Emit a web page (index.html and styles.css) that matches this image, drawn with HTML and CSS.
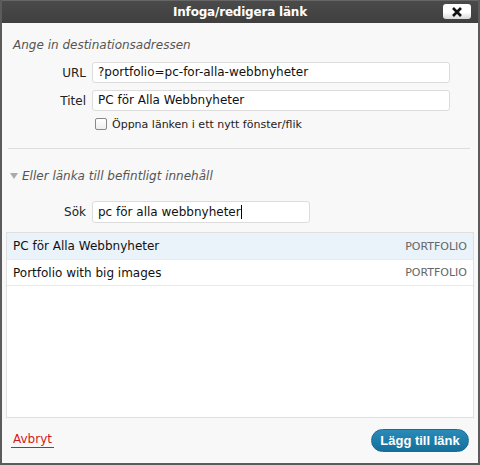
FILE: index.html
```html
<!DOCTYPE html>
<html>
<head>
<meta charset="utf-8">
<link rel="stylesheet" href="styles.css">
</head>
<body>
<div class="dialog">
  <div class="titlebar">
    <span class="title">Infoga/redigera länk</span>
    <span class="close"><svg width="12" height="10" viewBox="0 0 12 10"><path d="M2 1 L10 9 M10 1 L2 9" stroke="#111" stroke-width="2.6" stroke-linecap="butt"/></svg></span>
  </div>
  <div class="body">
    <div class="heading">Ange in destinationsadressen</div>
    <div class="row url-row">
      <label class="lbl">URL</label>
      <div class="input wide">?portfolio=pc-for-alla-webbnyheter</div>
    </div>
    <div class="row title-row">
      <label class="lbl">Titel</label>
      <div class="input wide">PC för Alla Webbnyheter</div>
    </div>
    <div class="check-row">
      <span class="checkbox"></span>
      <span>Öppna länken i ett nytt fönster/flik</span>
    </div>
    <div class="sep"></div>
    <div class="heading2"><span class="tri"></span>Eller länka till befintligt innehåll</div>
    <div class="row search-row">
      <label class="lbl">Sök</label>
      <div class="input narrow">pc för alla webbnyheter<span class="caret"></span></div>
    </div>
    <div class="list">
      <div class="item selected"><span>PC för Alla Webbnyheter</span><span class="type">PORTFOLIO</span></div>
      <div class="item"><span>Portfolio with big images</span><span class="type">PORTFOLIO</span></div>
    </div>
  </div>
  <div class="footer">
    <a class="cancel">Avbryt</a>
    <span class="btn">Lägg till länk</span>
  </div>
</div>
</body>
</html>
```
FILE: styles.css
```css
html, body {
  margin: 0;
  padding: 0;
}
body {
  width: 480px;
  height: 465px;
  font-family: "DejaVu Sans", "Liberation Sans", sans-serif;
  font-size: 12px;
  color: #222;
  background: #fff;
}
.dialog {
  width: 480px;
  height: 465px;
  box-sizing: border-box;
  border-left: 2px solid #5b5b5b;
  border-right: 2px solid #5b5b5b;
  border-bottom: 2px solid #5b5b5b;
  background: #f8f8f8;
  display: flex;
  flex-direction: column;
}
.titlebar {
  height: 23px;
  flex: none;
  background: linear-gradient(#4a4a4a, #3f3f3f);
  border-top: 1px solid #666;
  box-sizing: border-box;
  display: flex;
  align-items: center;
  justify-content: center;
  position: relative;
}
.title {
  color: #fff;
  font-weight: bold;
  font-size: 12px;
  letter-spacing: -0.2px;
}
.close {
  position: absolute;
  right: 7px;
  top: 3px;
  width: 28px;
  height: 15px;
  background: linear-gradient(#ffffff 55%, #d8d8d8);
  border-radius: 3px;
  display: flex;
  align-items: center;
  justify-content: center;
}
.body {
  flex: 1;
  display: flex;
  flex-direction: column;
  padding: 0 4px 0 4px;
}
.heading {
  font-style: italic;
  color: #555;
  font-size: 12px;
  margin: 14px 0 0 7px;
  height: 16px;
  line-height: 16px;
}
.row {
  display: flex;
  align-items: center;
}
.lbl {
  width: 80px;
  text-align: right;
  padding-right: 6px;
  font-size: 12px;
  color: #222;
}
.input {
  box-sizing: border-box;
  height: 21px;
  line-height: 19px;
  border: 1px solid #dcdcdc;
  border-radius: 3px;
  background: #fff;
  padding: 0 5px;
  font-size: 12px;
  color: #111;
  white-space: nowrap;
}
.wide {
  width: 358px;
}
.narrow {
  width: 218px;
  height: 22px;
  line-height: 20px;
}
.url-row {
  margin-top: 9px;
}
.title-row {
  margin-top: 7px;
}
.check-row {
  display: flex;
  align-items: center;
  margin: 6px 0 0 89px;
  font-size: 11px;
  color: #222;
  height: 14px;
}
.checkbox {
  width: 10px;
  height: 10px;
  border: 1px solid #888;
  border-radius: 2px;
  background: linear-gradient(#fff, #eee);
  margin-right: 5px;
}
.sep {
  height: 1px;
  background: #dddddd;
  margin: 17px 4px 0 2px;
}
.heading2 {
  font-style: italic;
  color: #555;
  font-size: 12px;
  margin: 19px 0 0 4px;
  height: 16px;
  line-height: 16px;
  display: flex;
  align-items: center;
}
.tri {
  width: 0;
  height: 0;
  border-left: 4px solid transparent;
  border-right: 4px solid transparent;
  border-top: 6px solid #aaa;
  margin-right: 4px;
}
.search-row {
  margin-top: 17px;
}
.caret {
  display: inline-block;
  width: 1px;
  height: 14px;
  background: #000;
  vertical-align: -3px;
}
.list {
  margin-top: 9px;
  height: 186px;
  flex: none;
  box-sizing: border-box;
  border: 1px solid #dfdfdf;
  background: #fff;
}
.item {
  display: flex;
  justify-content: space-between;
  align-items: center;
  height: 26px;
  box-sizing: border-box;
  padding: 0 6px 0 6px;
  border-bottom: 1px solid #eaeaea;
  font-size: 12px;
  color: #111;
}
.item.selected {
  background: #eaf2fa;
  height: 27px;
}
.type {
  color: #666;
  font-size: 11px;
}
.footer {
  height: 45px;
  flex: none;
  display: flex;
  align-items: center;
  justify-content: space-between;
  padding: 0 9px 0 9px;
  box-sizing: border-box;
}
.cancel {
  color: #d21b1b;
  font-size: 12px;
  border-bottom: 1px solid #d21b1b;
  padding: 0 2px 1px 2px;
  margin-top: -2px;
}
.btn {
  background: linear-gradient(#2b8ab8, #13709d);
  border: 1px solid #1b6a91;
  color: #fff;
  font-family: "Liberation Sans", sans-serif;
  font-weight: bold;
  font-size: 13px;
  border-radius: 12px;
  height: 23px;
  line-height: 21px;
  padding: 0;
  box-sizing: border-box;
  width: 98px;
  text-align: center;
  white-space: nowrap;
}
```
